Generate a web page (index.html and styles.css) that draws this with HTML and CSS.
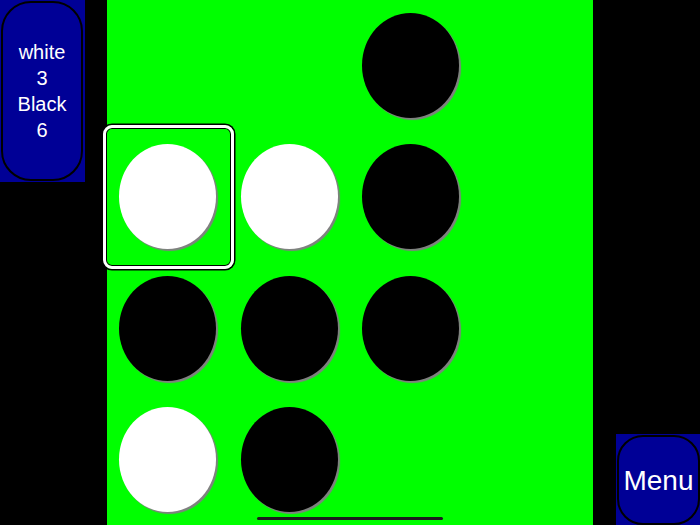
FILE: index.html
```html
<!DOCTYPE html>
<html>
<head>
<meta charset="utf-8">
<link rel="stylesheet" href="styles.css">
</head>
<body>
<div class="screen">
  <aside class="side side-left">
    <div class="score">
      <div class="score-inner">
        <div>white</div>
        <div>3</div>
        <div>Black</div>
        <div>6</div>
      </div>
    </div>
  </aside>
  <main class="board">
    <div class="cell"></div>
    <div class="cell"></div>
    <div class="cell"><div class="disc black"></div></div>
    <div class="cell"></div>

    <div class="cell selected"><div class="disc white"></div></div>
    <div class="cell"><div class="disc white"></div></div>
    <div class="cell"><div class="disc black"></div></div>
    <div class="cell"></div>

    <div class="cell"><div class="disc black"></div></div>
    <div class="cell"><div class="disc black"></div></div>
    <div class="cell"><div class="disc black"></div></div>
    <div class="cell"></div>

    <div class="cell"><div class="disc white"></div></div>
    <div class="cell"><div class="disc black"></div></div>
    <div class="cell"></div>
    <div class="cell"></div>
  </main>
  <aside class="side side-right">
    <div class="menu"><div class="menu-inner">Menu</div></div>
  </aside>
  <div class="home-indicator"></div>
</div>
</body>
</html>
```
FILE: styles.css
```css
html, body {
  margin: 0;
  padding: 0;
  background: #000;
}

.screen {
  position: relative;
  width: 700px;
  height: 525px;
  display: flex;
  background: #000;
  font-family: "Liberation Sans", Arial, sans-serif;
  color: #fff;
  overflow: hidden;
}

.side {
  width: 107px;
  display: flex;
  flex-direction: column;
}

.side-right {
  justify-content: flex-end;
  align-items: flex-end;
}

.score {
  width: 85px;
  height: 182px;
  background: #000096;
  padding: 1px 2px 1px 1px;
  box-sizing: border-box;
}

.score-inner {
  height: 100%;
  border: 2px solid #000;
  border-radius: 30px;
  box-sizing: border-box;
  display: flex;
  flex-direction: column;
  justify-content: center;
  align-items: center;
  font-size: 20px;
  line-height: 26px;
}

.menu {
  width: 84px;
  height: 91px;
  background: #000096;
  padding: 1px 0 0 1px;
  box-sizing: border-box;
}

.menu-inner {
  height: 100%;
  border: 2px solid #000;
  border-radius: 26px;
  box-sizing: border-box;
  display: flex;
  justify-content: center;
  align-items: center;
  font-size: 28px;
  padding-top: 2px;
}

.board {
  width: 486px;
  height: 525px;
  background: #00ff00;
  display: grid;
  grid-template-columns: repeat(4, 1fr);
  grid-template-rows: repeat(4, 1fr);
}

.cell {
  position: relative;
  display: flex;
  justify-content: center;
  align-items: center;
}

.disc {
  width: 80%;
  height: 80%;
  border-radius: 50%;
  box-shadow: 2px 2px 1px #808080;
}

.disc.black { background: #000; }
.disc.white { background: #fff; }

.selected::after {
  content: "";
  position: absolute;
  top: -6px;
  left: -4px;
  right: -5px;
  bottom: -6px;
  border: 3px solid #fff;
  border-radius: 9px;
  box-shadow: 0 0 0 1.5px #000, inset 0 0 0 1px #000;
}

.home-indicator {
  position: absolute;
  left: 257px;
  bottom: 5px;
  width: 186px;
  height: 3px;
  border-radius: 2px;
  background: #1c1c1c;
}
```
